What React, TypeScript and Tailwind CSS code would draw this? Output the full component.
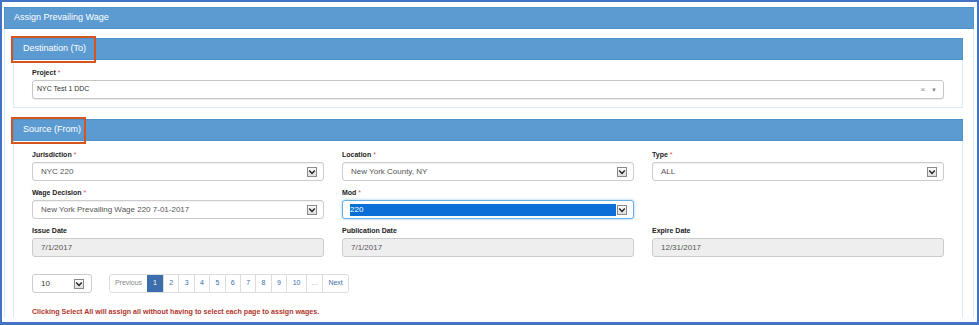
import type { ReactNode } from "react";

const font = { fontFamily: '"Liberation Sans", Arial, sans-serif' };

function Arrow() {
  return (
    <span className="flex h-[10px] w-[10px] shrink-0 items-center justify-center border border-[#8a8a8a] bg-gradient-to-b from-[#fbfbfb] to-[#dedede]">
      <svg width="8" height="8" viewBox="0 0 8 8">
        <path d="M1.2 2.6 L4 5.4 L6.8 2.6" fill="none" stroke="#222" strokeWidth="1.4" />
      </svg>
    </span>
  );
}

function Label({ children }: { children: ReactNode }) {
  return (
    <div className="h-[9px] text-[7px] leading-[9px] font-bold text-[#222]">
      {children} <span className="font-normal text-[#d9534f]">*</span>
    </div>
  );
}

function Select({ value, focused }: { value: string; focused?: boolean }) {
  return (
    <div
      className={
        focused
          ? "mt-[3px] flex h-[19px] items-center rounded-[3px] border border-[#66afe9] bg-white pl-[7px] pr-[6px] shadow-[0_0_3px_rgba(102,175,233,0.7)]"
          : "mt-[3px] flex h-[19px] items-center rounded-[3px] border border-[#cccccc] bg-white pl-[8px] pr-[6px] shadow-[inset_0_1px_1px_rgba(0,0,0,0.06)]"
      }
    >
      {focused ? (
        <span className="mr-[1px] flex h-[12px] flex-1 items-center bg-[#0a6fd6] text-[8px] text-white">
          {value}
        </span>
      ) : (
        <span className="flex-1 text-[8px] text-[#555]">{value}</span>
      )}
      <Arrow />
    </div>
  );
}

function ReadOnly({ label, value }: { label: string; value: string }) {
  return (
    <div>
      <div className="h-[9px] text-[7px] leading-[9px] font-bold text-[#222]">{label}</div>
      <div className="mt-[3px] flex h-[19px] items-center rounded-[3px] border border-[#cccccc] bg-[#eeeeee] pl-[8px] text-[8px] text-[#555]">
        {value}
      </div>
    </div>
  );
}

function SubHeader({ title, boxWidth }: { title: string; boxWidth: string }) {
  return (
    <div className="relative flex h-[22px] items-center border border-[#4f92cc] bg-[#5b9bd1] pl-[9px] text-[9px] text-white">
      {title}
      <div className={`absolute -left-[3px] -top-[3px] h-[27px] border-2 border-[#d4561d] ${boxWidth}`} />
    </div>
  );
}

const pages = ["2", "3", "4", "5", "6", "7", "8", "9"];

export default function App() {
  return (
    <div
      style={font}
      className="h-[325px] w-[979px] overflow-hidden border-2 border-b-[3px] border-[#4472c4] bg-white"
    >
      <div className="h-[316px] overflow-hidden pl-[2px] pr-[3px] pt-[5px]">
        <div className="h-[400px] border-x border-[#d6eef7]">
          <div className="-mx-px flex h-[22px] items-center border border-[#4f92cc] bg-[#5b9bd1] pl-[9px] text-[9px] text-white">
            Assign Prevailing Wage
          </div>

          <div className="ml-[8px] mr-[10px] pt-[9px]">
            <SubHeader title="Destination (To)" boxWidth="w-[85px]" />
            <div className="border-x border-b border-[#d6eef7] px-[18px] pb-[8px] pt-[8px]">
              <Label>Project</Label>
              <div className="mt-[3px] flex h-[19px] items-center rounded-[3px] border border-[#c6c6c6] bg-white pl-[4px] pr-[6px] shadow-[0_1px_1px_rgba(0,0,0,0.08)]">
                <span className="flex-1 text-[7px] text-[#333]">NYC Test 1 DDC</span>
                <span className="mr-[6px] text-[8px] leading-none text-[#888]">×</span>
                <span className="text-[6px] leading-none text-[#888]">▼</span>
              </div>
            </div>

            <div className="mt-[11px]">
              <SubHeader title="Source (From)" boxWidth="w-[75px]" />
              <div className="border-x border-[#d6eef7] px-[18px] pt-[9px]">
                <div className="grid grid-cols-3 gap-x-[18px] gap-y-[7px]">
                  <div>
                    <Label>Jurisdiction</Label>
                    <Select value="NYC 220" />
                  </div>
                  <div>
                    <Label>Location</Label>
                    <Select value="New York County, NY" />
                  </div>
                  <div>
                    <Label>Type</Label>
                    <Select value="ALL" />
                  </div>
                  <div>
                    <Label>Wage Decision</Label>
                    <Select value="New York Prevailing Wage 220 7-01-2017" />
                  </div>
                  <div>
                    <Label>Mod</Label>
                    <Select value="220" focused />
                  </div>
                  <div />
                  <ReadOnly label="Issue Date" value="7/1/2017" />
                  <ReadOnly label="Publication Date" value="7/1/2017" />
                  <ReadOnly label="Expire Date" value="12/31/2017" />
                </div>

                <div className="mt-[17px] flex items-center">
                  <div className="flex h-[19px] w-[60px] items-center rounded-[3px] border border-[#cccccc] pl-[8px] pr-[7px]">
                    <span className="flex-1 text-[8px] text-[#333]">10</span>
                    <Arrow />
                  </div>
                  <div className="ml-[17px] flex h-[19px] rounded-[3px] border border-[#dddddd] text-[7px]">
                    <span className="flex w-[37px] items-center justify-center text-[#888]">Previous</span>
                    <span className="flex w-[16px] items-center justify-center bg-[#3c6ead] text-white">1</span>
                    {pages.map((p) => (
                      <span
                        key={p}
                        className="flex w-[15.4px] items-center justify-center border-l border-[#dddddd] text-[#3c6ead]"
                      >
                        {p}
                      </span>
                    ))}
                    <span className="flex w-[20px] items-center justify-center border-l border-[#dddddd] text-[#3c6ead]">10</span>
                    <span className="flex w-[16px] items-center justify-center border-l border-[#dddddd] text-[#999]">…</span>
                    <span className="flex w-[26px] items-center justify-center border-l border-[#dddddd] text-[#3c6ead]">Next</span>
                  </div>
                </div>

                <div className="mt-[14px] text-[7.1px] font-bold text-[#b0362b]">
                  Clicking Select All will assign all without having to select each page to assign wages.
                </div>
                <div className="h-[40px]" />
              </div>
            </div>
          </div>
        </div>
      </div>
    </div>
  );
}
